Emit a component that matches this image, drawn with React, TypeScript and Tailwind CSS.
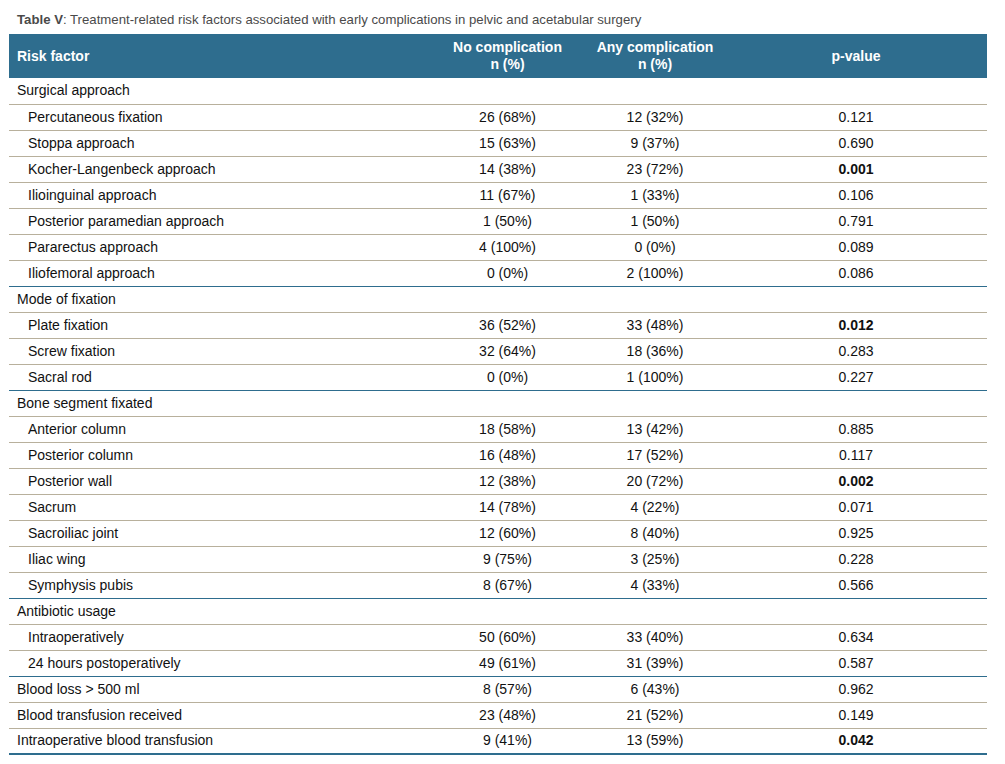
import React from "react";

type Row = {
  label: string;
  sub?: boolean;
  no?: string;
  any?: string;
  p?: string;
  bold?: boolean;
  blueTop?: boolean;
};

const rows: Row[] = [
  { label: "Surgical approach" },
  { label: "Percutaneous fixation", sub: true, no: "26 (68%)", any: "12 (32%)", p: "0.121" },
  { label: "Stoppa approach", sub: true, no: "15 (63%)", any: "9 (37%)", p: "0.690" },
  { label: "Kocher-Langenbeck approach", sub: true, no: "14 (38%)", any: "23 (72%)", p: "0.001", bold: true },
  { label: "Ilioinguinal approach", sub: true, no: "11 (67%)", any: "1 (33%)", p: "0.106" },
  { label: "Posterior paramedian approach", sub: true, no: "1 (50%)", any: "1 (50%)", p: "0.791" },
  { label: "Pararectus approach", sub: true, no: "4 (100%)", any: "0 (0%)", p: "0.089" },
  { label: "Iliofemoral approach", sub: true, no: "0 (0%)", any: "2 (100%)", p: "0.086" },
  { label: "Mode of fixation", blueTop: true },
  { label: "Plate fixation", sub: true, no: "36 (52%)", any: "33 (48%)", p: "0.012", bold: true },
  { label: "Screw fixation", sub: true, no: "32 (64%)", any: "18 (36%)", p: "0.283" },
  { label: "Sacral rod", sub: true, no: "0 (0%)", any: "1 (100%)", p: "0.227" },
  { label: "Bone segment fixated", blueTop: true },
  { label: "Anterior column", sub: true, no: "18 (58%)", any: "13 (42%)", p: "0.885" },
  { label: "Posterior column", sub: true, no: "16 (48%)", any: "17 (52%)", p: "0.117" },
  { label: "Posterior wall", sub: true, no: "12 (38%)", any: "20 (72%)", p: "0.002", bold: true },
  { label: "Sacrum", sub: true, no: "14 (78%)", any: "4 (22%)", p: "0.071" },
  { label: "Sacroiliac joint", sub: true, no: "12 (60%)", any: "8 (40%)", p: "0.925" },
  { label: "Iliac wing", sub: true, no: "9 (75%)", any: "3 (25%)", p: "0.228" },
  { label: "Symphysis pubis", sub: true, no: "8 (67%)", any: "4 (33%)", p: "0.566" },
  { label: "Antibiotic usage", blueTop: true },
  { label: "Intraoperatively", sub: true, no: "50 (60%)", any: "33 (40%)", p: "0.634" },
  { label: "24 hours postoperatively", sub: true, no: "49 (61%)", any: "31 (39%)", p: "0.587" },
  { label: "Blood loss > 500 ml", blueTop: true, no: "8 (57%)", any: "6 (43%)", p: "0.962" },
  { label: "Blood transfusion received", no: "23 (48%)", any: "21 (52%)", p: "0.149" },
  { label: "Intraoperative blood transfusion", no: "9 (41%)", any: "13 (59%)", p: "0.042", bold: true },
];

export default function App() {
  return (
    <div
      className="w-[1005px] h-[764px] bg-white pl-[9px] pt-[12px] text-[#111]"
      style={{ fontFamily: '"Liberation Sans", Arial, sans-serif' }}
    >
      <p className="pl-[8px] text-[13.2px] leading-[16px] text-[#4a4a4a] h-[22px]">
        <span className="font-bold">Table V</span>: Treatment-related risk factors associated with early complications in pelvic and acetabular surgery
      </p>
      <table className="w-[978px] border-collapse text-[14px] table-fixed">
        <colgroup>
          <col className="w-[421px]" />
          <col className="w-[155px]" />
          <col className="w-[140px]" />
          <col className="w-[262px]" />
        </colgroup>
        <thead>
          <tr className="bg-[#2e6d8e] text-white font-bold h-[44px] leading-[17px]">
            <th className="text-left pl-[8px] font-bold">Risk factor</th>
            <th className="text-center font-bold">
              No complication
              <br />n (%)
            </th>
            <th className="text-center font-bold">
              Any complication
              <br />n (%)
            </th>
            <th className="text-center font-bold">p-value</th>
          </tr>
        </thead>
        <tbody>
          {rows.map((r, i) => {
            const last = i === rows.length - 1;
            const next = rows[i + 1];
            const border = last
              ? "border-b-2 border-[#2e6d8e]"
              : next && next.blueTop
              ? "border-b border-[#2e6d8e]"
              : "border-b border-[#b8b09c]";
            return (
              <tr key={i} className={`h-[26px] ${border}`}>
                <td className={r.sub ? "pl-[19px]" : "pl-[8px]"}>{r.label}</td>
                <td className="text-center">{r.no}</td>
                <td className="text-center">{r.any}</td>
                <td className={`text-center ${r.bold ? "font-bold" : ""}`}>{r.p}</td>
              </tr>
            );
          })}
        </tbody>
      </table>
    </div>
  );
}
